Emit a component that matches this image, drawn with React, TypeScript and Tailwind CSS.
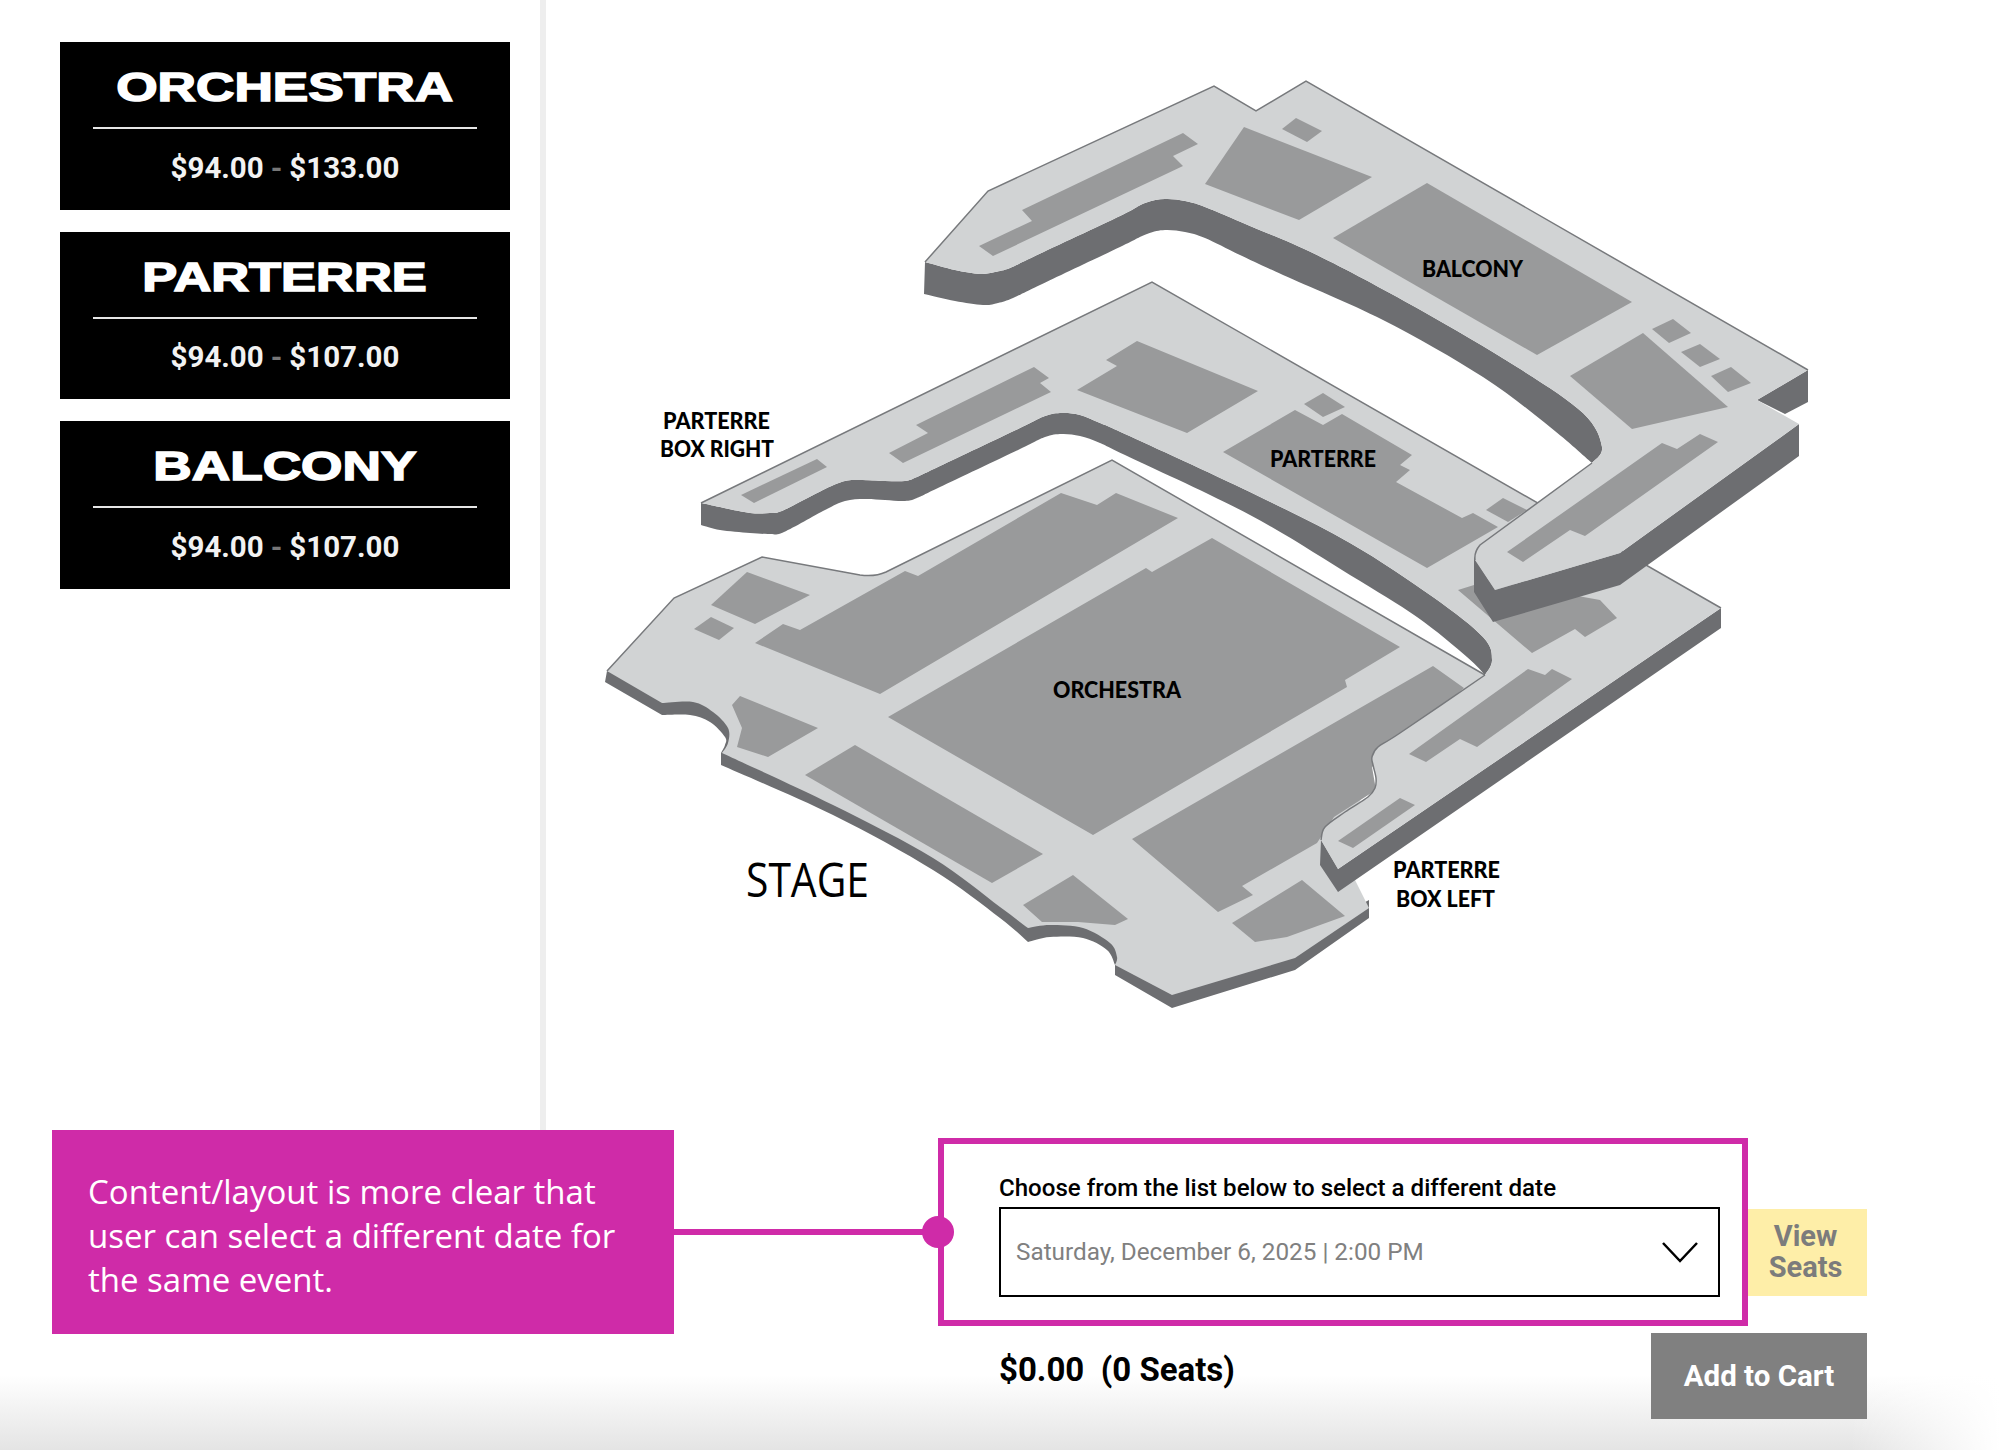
import React from 'react';

const TOP = '#d1d3d4';
const SEAT = '#999a9b';
const WALL = '#6d6e71';
const EDGE = '#77797c';

type Pt = [number, number];

// Catmull-Rom through the points, starts from the current pen position
const spline = (pts: Pt[]) => {
  let d = '';
  for (let i = 0; i < pts.length - 1; i++) {
    const p0 = pts[i - 1] ?? pts[i];
    const p1 = pts[i];
    const p2 = pts[i + 1];
    const p3 = pts[i + 2] ?? p2;
    const c1 = [p1[0] + (p2[0] - p0[0]) / 6, p1[1] + (p2[1] - p0[1]) / 6];
    const c2 = [p2[0] - (p3[0] - p1[0]) / 6, p2[1] - (p3[1] - p1[1]) / 6];
    d += ` C${c1[0]} ${c1[1]} ${c2[0]} ${c2[1]} ${p2[0]} ${p2[1]}`;
  }
  return d;
};
const rev = (pts: Pt[]) => [...pts].reverse();

// balcony inner curve, from the right tip to the left end
const balconyTop: Pt[] = [
  [1592, 463], [1602, 447], [1583, 413], [1517, 367], [1417, 308], [1317, 255],
  [1250, 226], [1205, 207], [1185, 201], [1165, 199], [1145, 203], [1120, 216],
  [1035, 256], [1010, 268], [995, 272], [980, 274], [955, 270], [925, 262],
];
const balconyLow: Pt[] = [
  [1592, 463], [1550, 427], [1483, 377], [1383, 320], [1283, 275], [1240, 255],
  [1205, 238], [1185, 232], [1165, 230], [1147, 234], [1120, 247], [1040, 285],
  [1013, 298], [998, 303], [983, 305], [955, 301], [924, 294],
];

// parterre inner curve
const parterreTop: Pt[] = [
  [1485, 675], [1492, 660], [1483, 637], [1433, 597], [1350, 543], [1250, 492],
  [1125, 434], [1100, 423], [1080, 415], [1062, 413], [1045, 416], [1020, 428],
  [940, 466], [917, 477], [905, 481], [885, 481], [860, 480], [845, 481],
  [825, 489], [784, 510], [770, 513], [750, 513], [720, 507], [701, 503],
];
const parterreLow: Pt[] = [
  [1485, 675], [1467, 657], [1417, 617], [1350, 575], [1250, 515], [1125, 455],
  [1100, 443], [1080, 436], [1062, 434], [1045, 437], [1020, 449], [940, 487],
  [917, 498], [905, 501], [885, 500], [865, 499], [845, 501], [825, 510],
  [784, 532], [770, 534], [750, 533], [720, 530], [701, 525],
];

const parterreBoxEdge =
  'L1321 840' +
  spline([
    [1321, 840], [1325, 827], [1345, 812], [1368, 797], [1375, 788], [1376, 778],
    [1373, 765], [1372, 757], [1378, 747], [1400, 733], [1485, 675],
  ]);

const orchestraFront =
  spline([[662, 703], [693, 702], [713, 712], [728, 728], [728, 743], [722, 753]]) +
  spline([[722, 753], [833, 805], [933, 858], [1000, 907], [1028, 928]]) +
  spline([[1028, 928], [1050, 925], [1083, 928], [1110, 943], [1117, 957], [1115, 965]]);

const orchestraWall =
  'M607 671 L605 682 L662 715' +
  spline([[662, 715], [690, 715], [710, 722], [725, 737], [725, 745], [721, 753]]) +
  ' L721 765' +
  spline([[721, 765], [833, 815], [933, 870], [1000, 918], [1028, 942]]) +
  spline([[1028, 942], [1050, 937], [1083, 938], [1107, 950], [1115, 965]]) +
  ' L1115 975 L1172 1008 L1295 970 L1369 918 L1369 900 L1295 940 L1172 975 L1100 900 L1000 880 L833 790 L735 735 L725 695 L662 680 Z';

// seat blocks, full page coordinates
const orchestraSeats = [
  '1061,493 1097,505 1116,493 1178,518 880,694 755,643 783,624 800,630 905,571 918,576',
  '1212,538 1400,647 1345,680 1347,687 1093,835 888,717 1146,568 1152,572',
  '1433,666 1464,688 1372,767 1376,790 1334,817 1317,843 1242,886 1253,895 1218,912 1132,839',
  '855,745 1043,854 992,883 805,775',
  '740,696 818,728 768,757 737,747 742,728 732,705',
  '1073,875 1128,919 1115,925 1078,922 1042,922 1023,905',
  '1302,880 1345,916 1287,937 1255,942 1232,923',
  '747,572 810,595 755,624 711,605',
  '711,617 734,628 719,640 694,629',
];

const parterreSeats = [
  '1034,367 1049,378 1040,383 1051,392 903,463 889,453 928,433 916,425',
  '1137,341 1258,391 1187,433 1077,390 1117,366 1106,360',
  '817,459 827,467 754,503 741,495',
  '1323,393 1345,407 1323,417 1304,404',
  '1295,410 1323,425 1342,414 1412,455 1400,465 1410,470 1396,482 1462,518 1473,513 1498,527 1427,568 1223,452',
  '1503,498 1527,510 1508,522 1486,510',
  '1458,590 1490,580 1600,600 1617,618 1585,637 1575,629 1532,653',
  '1528,669 1545,675 1552,669 1572,679 1477,747 1460,739 1426,762 1409,754',
  '1400,798 1415,805 1353,848 1338,841',
];

const balconySeats = [
  '1183,133 1198,144 1173,156 1183,166 993,256 979,246 1032,221 1022,210',
  '1244,127 1372,177 1299,220 1205,184',
  '1296,118 1322,131 1307,142 1282,129',
  '1427,183 1632,302 1537,355 1333,238',
  '1643,333 1728,407 1632,429 1570,376',
  '1673,319 1691,333 1669,343 1652,329',
  '1700,344 1720,359 1700,367 1681,352',
  '1731,367 1751,383 1728,392 1711,376',
  '1700,434 1718,442 1585,536 1570,530 1523,562 1507,552 1662,443 1677,449',
];

const mapLabels = [
  { text: 'BALCONY', x: 1422, y: 277, len: 101 },
  { text: 'PARTERRE', x: 1270, y: 467, len: 106 },
  { text: 'ORCHESTRA', x: 1053, y: 698, len: 128 },
  { text: 'PARTERRE', x: 663, y: 429, len: 107 },
  { text: 'BOX RIGHT', x: 660, y: 457, len: 114 },
  { text: 'PARTERRE', x: 1393, y: 878, len: 107 },
  { text: 'BOX LEFT', x: 1396, y: 907, len: 99 },
];

const tiers = [
  { name: 'ORCHESTRA', price: '$133.00', scale: 'scale-x-[1.33]' },
  { name: 'PARTERRE', price: '$107.00', scale: 'scale-x-[1.31]' },
  { name: 'BALCONY', price: '$107.00', scale: 'scale-x-[1.33]' },
];

const SeatingMap = () => (
  <svg width="1454" height="1130" viewBox="546 0 1454 1130" className="block shrink-0">
    {/* orchestra */}
    <path fill={WALL} d={orchestraWall} />
    <path
      fill={TOP}
      d={`M607 671 L662 703${orchestraFront} L1172 995 L1295 958 L1369 908 L1355 880 L1338 869 L1378 747 L1485 675 L1112 460 Q1000 516 886 572 Q875 577 860 575 L762 557 L674 598 Z`}
    />
    {orchestraSeats.map((p) => (
      <polygon key={p} points={p} fill={SEAT} />
    ))}
    <path fill="none" stroke={EDGE} strokeWidth="1.5" d="M607 671 L674 598 L762 557 L860 575 Q875 577 886 572 L1112 460 L1485 675" />

    {/* parterre */}
    <path fill={WALL} d={`M701 503${spline(rev(parterreTop))}${spline(parterreLow)} Z`} />
    <path fill={WALL} d="M1721 608 L1721 628 L1338 892 L1320 865 L1321 840 L1338 869 Z" />
    <path fill={TOP} d={`M701 503 L1152 282 L1721 608 L1338 869 ${parterreBoxEdge}${spline(parterreTop)} Z`} />
    {parterreSeats.map((p) => (
      <polygon key={p} points={p} fill={SEAT} />
    ))}
    <path fill="none" stroke={EDGE} strokeWidth="1.5" d={`M701 503 L1152 282 L1721 608 M1321 840 ${parterreBoxEdge}`} />

    {/* balcony */}
    <path fill={WALL} d={`M925 262${spline(rev(balconyTop))}${spline(balconyLow)} Z`} />
    <path fill={WALL} d="M1808 370 L1808 402 L1785 414 L1757 400 Z" />
    <path fill={WALL} d="M1799 424 L1799 456 L1620 585 L1493 622 L1474 592 L1474 557 L1495 590 L1620 553 Z" />
    <path
      fill={TOP}
      d={`M925 262 L988 191 L1214 86 L1256 111 L1306 81 L1808 370 L1757 400 L1799 424 L1620 553 L1495 590 L1475 560 Q1474 552 1480 545 L1592 463${spline(balconyTop)} Z`}
    />
    {balconySeats.map((p) => (
      <polygon key={p} points={p} fill={SEAT} />
    ))}
    <path
      fill="none"
      stroke={EDGE}
      strokeWidth="1.5"
      d="M925 262 L988 191 L1214 86 L1256 111 L1306 81 L1808 370 M1475 560 Q1474 552 1480 545 L1592 463"
    />

    {mapLabels.map((l) => (
      <text
        key={`${l.text}-${l.x}`}
        x={l.x}
        y={l.y}
        fontFamily="Lato, sans-serif"
        fontWeight="900"
        fontSize="23.5"
        fill="#000"
        textLength={l.len}
        lengthAdjust="spacingAndGlyphs"
      >
        {l.text}
      </text>
    ))}
    <text
      x="746"
      y="897"
      fontFamily="'Open Sans', sans-serif"
      fontSize="47"
      fill="#000"
      textLength="123"
      lengthAdjust="spacingAndGlyphs"
    >
      STAGE
    </text>
  </svg>
);

const TierCard = ({ name, price, scale }: { name: string; price: string; scale: string }) => (
  <div className="flex h-[167.5px] w-[450px] flex-col items-center bg-black">
    <div className="flex h-[85px] w-full items-center justify-center pt-[5px]">
      <span className={`inline-block origin-center ${scale} font-['Liberation_Sans',sans-serif] text-[40px] leading-none font-bold text-white [-webkit-text-stroke:1.5px_white]`}>
        {name}
      </span>
    </div>
    <div className="h-[2px] w-[384px] bg-[#e6e6e6]" />
    <div className="flex flex-1 items-center justify-center pb-[3px] font-['Roboto',sans-serif] text-[29.5px] font-bold text-[#f2f2f2]">
      $94.00 <span className="mx-[7px] text-[#777]">-</span> {price}
    </div>
  </div>
);

export default function App() {
  return (
    <div className="relative h-[1450px] w-[2000px] overflow-hidden bg-white font-['Roboto',sans-serif]">
      <div className="flex h-[1130px]">
        <div className="flex w-[546px] shrink-0 flex-col gap-[22px] border-r-[6px] border-[#eeeeee] pt-[42px] pl-[60px]">
          {tiers.map((t) => (
            <TierCard key={t.name} name={t.name} price={t.price} scale={t.scale} />
          ))}
        </div>
        <SeatingMap />
      </div>

      <div className="relative z-10 pt-[44px] pl-[999px]">
        <div className="mb-[5px] text-[24.1px] leading-[28px] font-medium text-black">
          Choose from the list below to select a different date
        </div>
        <div className="flex items-center">
          <div className="flex h-[90px] w-[721px] items-center justify-between border-2 border-black pr-[20px] pl-[15px]">
            <span className="text-[24.3px] text-[#808080]">Saturday, December 6, 2025 | 2:00 PM</span>
            <svg width="36" height="22" viewBox="0 0 36 22" fill="none" stroke="#000" strokeWidth="2.5">
              <path d="M1 2 L18 20 L35 2" />
            </svg>
          </div>
          <div className="ml-[28px] flex h-[87px] w-[119px] items-center justify-center bg-[#feeea8] pr-[4px] text-center text-[29px] leading-[31px] font-bold text-[#7c7c7c]">
            View
            <br />
            Seats
          </div>
        </div>
        <div className="mt-[36px] flex w-[868px] items-start justify-between">
          <div className="mt-[15px] text-[33px] leading-[44px] font-bold whitespace-pre text-black">$0.00  (0 Seats)</div>
          <div className="flex h-[86px] w-[216px] items-center justify-center bg-[#808080] text-[29.5px] font-bold text-white">
            Add to Cart
          </div>
        </div>
      </div>

      {/* annotation overlay */}
      <div className="pointer-events-none absolute top-[1138px] left-[938px] z-20 h-[188px] w-[810px] border-[6px] border-[#cf2ba8]" />
      <div className="absolute top-[1130px] left-[52px] z-20 flex h-[204px] w-[622px] items-center bg-[#cf2ba8] px-[36px] pt-[8px] font-['Open_Sans',sans-serif] text-[33px] leading-[44px] text-white">
        Content/layout is more clear that user can select a different date for the same event.
      </div>
      <div className="absolute top-[1229px] left-[674px] z-20 h-[6px] w-[264px] bg-[#cf2ba8]" />
      <div className="absolute top-[1216px] left-[922px] z-20 size-[32px] rounded-full bg-[#cf2ba8]" />

      {/* soft fade at the bottom of the capture */}
      <div className="pointer-events-none absolute inset-x-0 bottom-0 h-[75px] bg-gradient-to-b from-transparent to-[#e4e4e4]" />
      <div className="pointer-events-none absolute right-0 bottom-0 h-[75px] w-[150px] bg-gradient-to-r from-transparent to-white" />
    </div>
  );
}
